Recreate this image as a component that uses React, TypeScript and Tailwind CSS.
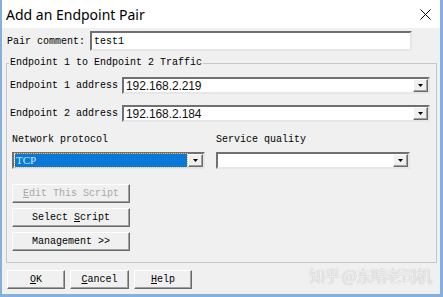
import React from "react";

const mono = { fontFamily: '"Liberation Mono", "DejaVu Sans Mono", monospace' };

function Arrow() {
  return (
    <div className="w-[15px] h-[13px] bg-[#f0f0f0] border border-t-white border-l-white border-b-[#6a6a6a] border-r-[#6a6a6a] shadow-[inset_-1px_-1px_0_#a0a0a0] flex items-center justify-center">
      <svg width="5" height="3" viewBox="0 0 5 3"><path d="M0 0h5L2.5 3z" fill="#000" /></svg>
    </div>
  );
}

function Combo({ value, w, selected }: { value: string; w: string; selected?: boolean }) {
  return (
    <div className={`${w} h-[17px] bg-white border-2 border-t-[#707070] border-l-[#707070] border-b-[#e6e6e6] border-r-[#e6e6e6] flex items-center`}>
      <div className="flex-1 h-full flex items-center pl-[1px] pr-[1px]">
        {selected ? (
          <div className="w-full h-[13px] bg-[#0a78d7] outline-1 outline-dotted outline-[#f0c060] flex items-center text-[11px] text-[#cfe8ff] leading-none pl-[1px]" style={{ fontFamily: '"Liberation Serif", serif' }}>
            {value}
          </div>
        ) : (
          <span className="text-[12px] leading-none text-[#111] pl-[1px] tracking-[-0.1px]" style={{ fontFamily: '"Liberation Sans", sans-serif' }}>{value}</span>
        )}
      </div>
      <Arrow />
    </div>
  );
}

function Btn({ children, w, disabled }: { children: React.ReactNode; w: string; disabled?: boolean }) {
  return (
    <div
      className={`${w} h-[19px] bg-[#f0f0f0] border border-t-white border-l-white border-b-[#6a6a6a] border-r-[#6a6a6a] shadow-[inset_-1px_-1px_0_#a0a0a0] flex items-center justify-center text-[10px] leading-none ${disabled ? "text-[#a8a8a8]" : "text-black"}`}
      style={mono}
    >
      {children}
    </div>
  );
}

export default function App() {
  return (
    <div className="w-[443px] h-[297px] bg-[#f0f0f0] border-l-2 border-r-[3px] border-b-[3px] border-[#86b0dc] flex flex-col relative overflow-hidden">
      <div className="h-[28px] bg-white flex items-center justify-between pl-[4px] pr-[9px] shrink-0">
        <span className="text-[14px] text-black" style={{ fontFamily: '"Noto Sans", "Open Sans", sans-serif' }}>Add an Endpoint Pair</span>
        <svg width="11" height="11" viewBox="0 0 11 11"><path d="M0.5 0.5L10.5 10.5M10.5 0.5L0.5 10.5" stroke="#000" strokeWidth="1" /></svg>
      </div>

      <div className="ml-[5px] mt-[3px] h-[20px] flex items-center" style={mono}>
        <span className="w-[83px] text-[10px] text-black">Pair comment:</span>
        <div className="w-[322px] h-[20px] bg-white border-2 border-t-[#707070] border-l-[#707070] border-b-[#e6e6e6] border-r-[#e6e6e6] flex items-center pl-[2px] text-[10px] text-black">test1</div>
      </div>

      <div className="ml-[4px] mt-[12px] w-[431px] h-[200px] border border-[#c8c8c8] relative shrink-0" style={mono}>
        <span className="absolute -top-[7px] left-[2px] bg-[#f0f0f0] px-[1px] text-[10px] leading-[12px] text-black">Endpoint 1 to Endpoint 2 Traffic</span>
        <div className="pl-[3px] pt-[13px] flex flex-col">
          <div className="flex items-center">
            <span className="w-[112px] text-[10px] text-black">Endpoint 1 address</span>
            <Combo w="w-[308px]" value="192.168.2.219" />
          </div>
          <div className="flex items-center mt-[11px]">
            <span className="w-[112px] text-[10px] text-black">Endpoint 2 address</span>
            <Combo w="w-[308px]" value="192.168.2.184" />
          </div>
        </div>
        <div className="pl-[5px] mt-[12px] flex">
          <div className="w-[204px] flex flex-col">
            <span className="text-[10px] leading-[12px] text-black">Network protocol</span>
            <div className="mt-[6px]"><Combo w="w-[193px]" value="TCP" selected /></div>
          </div>
          <div className="flex flex-col">
            <span className="text-[10px] leading-[12px] text-black">Service quality</span>
            <div className="mt-[6px]"><Combo w="w-[194px]" value="" /></div>
          </div>
        </div>
        <div className="pl-[5px] mt-[15px] flex flex-col gap-[5px]">
          <Btn w="w-[118px]" disabled><span><span className="underline">E</span>dit This Script</span></Btn>
          <Btn w="w-[118px]"><span>Select <span className="underline">S</span>cript</span></Btn>
          <Btn w="w-[118px]"><span>Management &gt;&gt;</span></Btn>
        </div>
      </div>

      <div className="ml-[5px] mt-[7px] flex gap-[5px]">
        <Btn w="w-[58px]"><span><span className="underline">O</span>K</span></Btn>
        <Btn w="w-[59px]"><span><span className="underline">C</span>ancel</span></Btn>
        <Btn w="w-[58px]"><span><span className="underline">H</span>elp</span></Btn>
      </div>

      <span
        className="absolute right-[9px] bottom-[7px] text-[16px] text-[#ececec] tracking-[-1px]"
        style={{ fontFamily: '"Noto Sans CJK SC", sans-serif', textShadow: "0 0 1px #b0b0b0" }}
      >
        知乎 @东晴老司机
      </span>
    </div>
  );
}
